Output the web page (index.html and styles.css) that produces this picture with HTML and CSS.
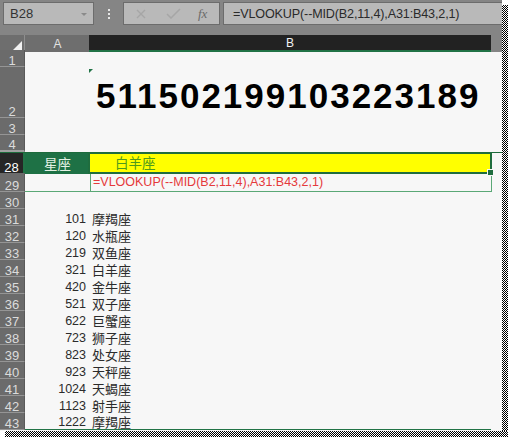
FILE: index.html
```
<!DOCTYPE html>
<html>
<head>
<meta charset="utf-8">
<link rel="stylesheet" href="styles.css">
</head>
<body>
<div class="frame">
  <div class="window">
    <div class="toolbar">
      <div class="namebox"><span>B28</span><span class="caret"></span></div>
      <div class="grip"><i></i><i></i><i></i></div>
      <div class="btns">
        <svg class="ico-x" width="10" height="10" viewBox="0 0 10 10"><path d="M1 1L9 9M9 1L1 9" stroke="#a6a6a6" stroke-width="1.4" fill="none"/></svg>
        <svg class="ico-ok" width="15" height="11" viewBox="0 0 15 11"><path d="M1 6L5 10L14 1" stroke="#a6a6a6" stroke-width="1.5" fill="none"/></svg>
        <span class="fx">fx</span>
      </div>
      <div class="formula">=VLOOKUP(--MID(B2,11,4),A31:B43,2,1)</div>
    </div>
    <div class="sheet">
      <div class="row colhead">
        <div class="corner"><svg width="9" height="9" viewBox="0 0 9 9"><polygon points="9,0 9,9 0,9" fill="#f2f2f2"/></svg></div>
        <div class="ch">A</div>
        <div class="ch chsel">B</div>
        <div class="chrest"></div>
      </div>
      <div class="row h17"><div class="rh">1</div><div class="c"></div><div class="c"></div><div class="c"></div></div>
      <div class="row h51"><div class="rh">2</div><div class="c"></div><div class="c big"><span class="flag"></span>511502199103223189</div><div class="c"></div></div>
      <div class="row h17"><div class="rh">3</div><div class="c"></div><div class="c"></div><div class="c"></div></div>
      <div class="row h17"><div class="rh rh4">4</div><div class="c"></div><div class="c"></div><div class="c"></div></div>
      <div class="row h21 r28"><div class="rh rhsel">28</div><div class="c key">星座</div><div class="c active">白羊座<span class="handle"></span></div><div class="c"></div></div>
      <div class="row h19 r29"><div class="rh">29</div><div class="c a29"></div><div class="c f29">=VLOOKUP(--MID(B2,11,4),A31:B43,2,1)</div><div class="c"></div></div>
      <div class="row h17"><div class="rh">30</div><div class="c"></div><div class="c"></div><div class="c"></div></div>
      <div class="row h17"><div class="rh">31</div><div class="c num">101</div><div class="c txt">摩羯座</div><div class="c"></div></div>
      <div class="row h17"><div class="rh">32</div><div class="c num">120</div><div class="c txt">水瓶座</div><div class="c"></div></div>
      <div class="row h17"><div class="rh">33</div><div class="c num">219</div><div class="c txt">双鱼座</div><div class="c"></div></div>
      <div class="row h17"><div class="rh">34</div><div class="c num">321</div><div class="c txt">白羊座</div><div class="c"></div></div>
      <div class="row h17"><div class="rh">35</div><div class="c num">420</div><div class="c txt">金牛座</div><div class="c"></div></div>
      <div class="row h17"><div class="rh">36</div><div class="c num">521</div><div class="c txt">双子座</div><div class="c"></div></div>
      <div class="row h17"><div class="rh">37</div><div class="c num">622</div><div class="c txt">巨蟹座</div><div class="c"></div></div>
      <div class="row h17"><div class="rh">38</div><div class="c num">723</div><div class="c txt">狮子座</div><div class="c"></div></div>
      <div class="row h17"><div class="rh">39</div><div class="c num">823</div><div class="c txt">处女座</div><div class="c"></div></div>
      <div class="row h17"><div class="rh">40</div><div class="c num">923</div><div class="c txt">天秤座</div><div class="c"></div></div>
      <div class="row h17"><div class="rh">41</div><div class="c num">1024</div><div class="c txt">天蝎座</div><div class="c"></div></div>
      <div class="row h17"><div class="rh">42</div><div class="c num">1123</div><div class="c txt">射手座</div><div class="c"></div></div>
      <div class="row h17 last"><div class="rh">43</div><div class="c num">1222</div><div class="c txt">摩羯座</div><div class="c"></div></div>
    </div>
  </div>
  <div class="shadow-r"></div>
  <div class="shadow-b"></div>
</div>
</body>
</html>
```
FILE: styles.css
```
html, body {
  margin: 0;
  padding: 0;
  background: #ffffff;
}
body {
  font-family: "Liberation Sans", "Noto Sans CJK SC", sans-serif;
}
.frame {
  display: grid;
  grid-template-columns: 502px 6px;
  grid-template-rows: 431px 6px;
}
.window {
  background: #f7f7f7;
  display: flex;
  flex-direction: column;
  overflow: hidden;
}
.shadow-r,
.shadow-b {
  background: repeating-conic-gradient(#000 0 25%, #fff 0 50%) 0 0 / 2px 2px;
}
.shadow-r {
  margin-top: 5px;
}
.shadow-b {
  grid-column: 1 / 3;
  margin-left: 5px;
}

/* toolbar */
.toolbar {
  height: 35px;
  flex: none;
  box-sizing: border-box;
  background: #858585;
  display: flex;
  align-items: flex-start;
  padding: 2px 0 0 3px;
}
.namebox,
.btns,
.formula {
  height: 23px;
  box-sizing: border-box;
  background: #b9b9b9;
  border: 1px solid #6c6c6c;
  display: flex;
  align-items: center;
}
.namebox {
  width: 91px;
  justify-content: space-between;
  padding: 0 6px 0 6px;
  font-size: 13px;
  color: #333;
}
.caret {
  width: 0;
  height: 0;
  border-left: 3px solid transparent;
  border-right: 3px solid transparent;
  border-top: 3px solid #8a8a8a;
  margin-top: 1px;
}
.grip {
  width: 29px;
  height: 23px;
  display: flex;
  flex-direction: column;
  align-items: center;
  justify-content: center;
  gap: 2px;
}
.grip i {
  width: 2px;
  height: 2px;
  background: #e6e6e6;
}
.btns {
  width: 97px;
  padding-left: 12px;
}
.ico-x {
  margin-right: 20px;
}
.ico-ok {
  margin-right: 17px;
}
.fx {
  font-family: "Liberation Serif", serif;
  font-style: italic;
  font-size: 13px;
  color: #6a6a6a;
}
.formula {
  margin-left: 3px;
  flex: 1;
  margin-right: -2px;
  padding-left: 9px;
  font-size: 12.6px;
  letter-spacing: -0.15px;
  color: #2a2a2a;
}

/* sheet */
.row {
  display: grid;
  grid-template-columns: 25px 65px 401px 11px;
  flex: none;
}
.colhead {
  height: 15px;
  background: #858585;
}
.corner {
  background: #6e6e6e;
  border-right: 1px solid #8e8e8e;
  display: flex;
  align-items: flex-end;
  justify-content: flex-end;
  padding: 0 2px 2px 0;
}
.ch {
  background: #6e6e6e;
  color: #e2e2e2;
  font-size: 12px;
  display: flex;
  align-items: center;
  justify-content: center;
  padding-top: 1px;
}
.chsel {
  background: #222222;
  color: #f2f2f2;
  border-bottom: 2px solid #217346;
  margin-left: -1px;
}
.chrest {
  background: #858585;
}
.h17 { height: 17px; }
.h51 { height: 51px; }
.h21 { height: 21px; }
.h19 { height: 19px; }

.rh {
  background: #6b6b6b;
  color: #dcdcdc;
  font-size: 13px;
  line-height: 9px;
  display: flex;
  justify-content: center;
  align-items: flex-end;
  box-sizing: border-box;
  border-bottom: 1px solid #959595;
  border-right: 1px solid #5a5a5a;
  padding-bottom: 1px;
}
.rh4 {
  border-bottom: 2px solid #a0a0a0;
}
.rhsel {
  background: #262626;
  color: #ffffff;
  border-right: 2px solid #217346;
}
.c {
  display: flex;
  align-items: flex-end;
  font-size: 13px;
  line-height: 9px;
  color: #2b2b2b;
  box-sizing: border-box;
  min-width: 0;
  white-space: nowrap;
}
.num {
  justify-content: flex-end;
  padding-right: 4px;
  padding-bottom: 2px;
  font-size: 12.5px;
}
.txt {
  padding-left: 2px;
  padding-bottom: 2px;
}
.big {
  position: relative;
  justify-content: flex-start;
  font-weight: bold;
  font-size: 35px;
  line-height: 35px;
  letter-spacing: 2px;
  color: #000;
  padding: 0 0 5px 6px;
}
.flag {
  position: absolute;
  left: -1px;
  top: 2px;
  width: 0;
  height: 0;
  border-top: 4px solid #217346;
  border-right: 4px solid transparent;
}
.r28 {
  border-top: 1px solid #1d6b3b;
  box-sizing: border-box;
}
.key {
  background: #1e7145;
  color: #e4f1e4;
  justify-content: center;
  align-items: center;
  font-size: 13.5px;
  line-height: 16px;
  padding-top: 2px;
}
.active {
  position: relative;
  background: #ffff00;
  border: 2px solid #1f6d3e;
  margin: -1px -1px 0 -2px;
  color: #4e9a1c;
  font-size: 13.5px;
  line-height: 16px;
  align-items: center;
  padding-left: 25px;
  padding-top: 2px;
}
.handle {
  position: absolute;
  right: -4px;
  bottom: -4px;
  width: 5px;
  height: 5px;
  background: #1f6d3e;
  border: 1px solid #f7f7f7;
}
.a29 {
  border-bottom: 1px solid #5aa876;
}
.f29 {
  border: 1px solid #5aa876;
  border-top: none;
  color: #e5393b;
  font-size: 12.5px;
  line-height: 9px;
  padding: 0 0 4px 2px;
  margin-right: -1px;
}
.last .c:nth-child(2),
.last .c:nth-child(3) {
  border-bottom: 1px solid #217346;
}
```
